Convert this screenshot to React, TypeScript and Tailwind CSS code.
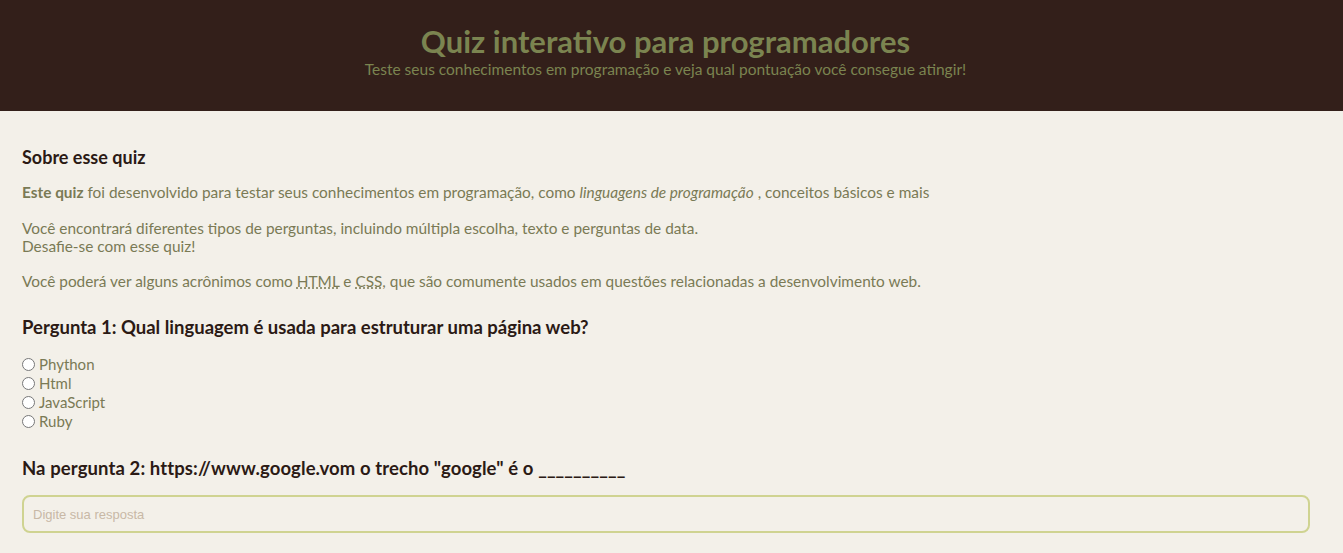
import React from "react";

const options = ["Phython", "Html", "JavaScript", "Ruby"];

export default function App() {
  return (
    <div className="min-h-screen bg-[#f3f0e9] font-['Lato','Open_Sans',sans-serif]">
      <header className="flex h-[111px] flex-col items-center bg-[#331f1a] pr-[12px] pt-[22px] text-[#7b8450]">
        <h1 className="text-[31px] font-bold leading-[38px]">Quiz interativo para programadores</h1>
        <p className="text-[15.5px] leading-[18px]">
          Teste seus conhecimentos em programação e veja qual pontuação você consegue atingir!
        </p>
      </header>

      <main className="px-[22px] pt-[35px] text-[#7a7a55]">
        <h2 className="text-[18px] font-bold leading-[22px] text-[#2b1a15]">Sobre esse quiz</h2>

        <p className="mt-[15px] text-[15.4px] leading-[18px]">
          <strong className="font-bold">Este quiz</strong> foi desenvolvido para testar seus conhecimentos em
          programação, como <em>linguagens de programação</em> , conceitos básicos e mais
        </p>

        <p className="mt-[18px] text-[15.4px] leading-[18px]">
          Você encontrará diferentes tipos de perguntas, incluindo múltipla escolha, texto e perguntas de data.
          <br />
          Desafie-se com esse quiz!
        </p>

        <p className="mt-[17px] text-[15.4px] leading-[18px]">
          Você poderá ver alguns acrônimos como{" "}
          <abbr title="HyperText Markup Language" className="underline decoration-dotted">
            HTML
          </abbr>{" "}
          e{" "}
          <abbr title="Cascading Style Sheets" className="underline decoration-dotted">
            CSS
          </abbr>
          , que são comumente usados em questões relacionadas a desenvolvimento web.
        </p>

        <h3 className="mt-[25px] text-[18.5px] font-bold leading-[24px] text-[#2b1a15]">
          Pergunta 1: Qual linguagem é usada para estruturar uma página web?
        </h3>

        <div className="mt-[16px] flex flex-col">
          {options.map((o) => (
            <label key={o} className="flex h-[19px] items-center text-[15px]">
              <input type="radio" name="q1" className="m-0 mr-[4px] h-[13px] w-[13px]" />
              {o}
            </label>
          ))}
        </div>

        <h3 className="mt-[25px] text-[18.5px] font-bold leading-[24px] tracking-[0.1px] text-[#2b1a15]">
          Na pergunta 2: https://www.google.vom o trecho "google" é o __________
        </h3>

        <input
          type="text"
          placeholder="Digite sua resposta"
          className="mt-[15px] h-[38px] w-[calc(100%-11px)] rounded-[8px] border-2 border-[#cfd391] bg-transparent px-[9px] font-['Liberation_Sans',sans-serif] text-[13px] outline-none placeholder:text-[#c8b8a6]"
        />
      </main>
    </div>
  );
}
